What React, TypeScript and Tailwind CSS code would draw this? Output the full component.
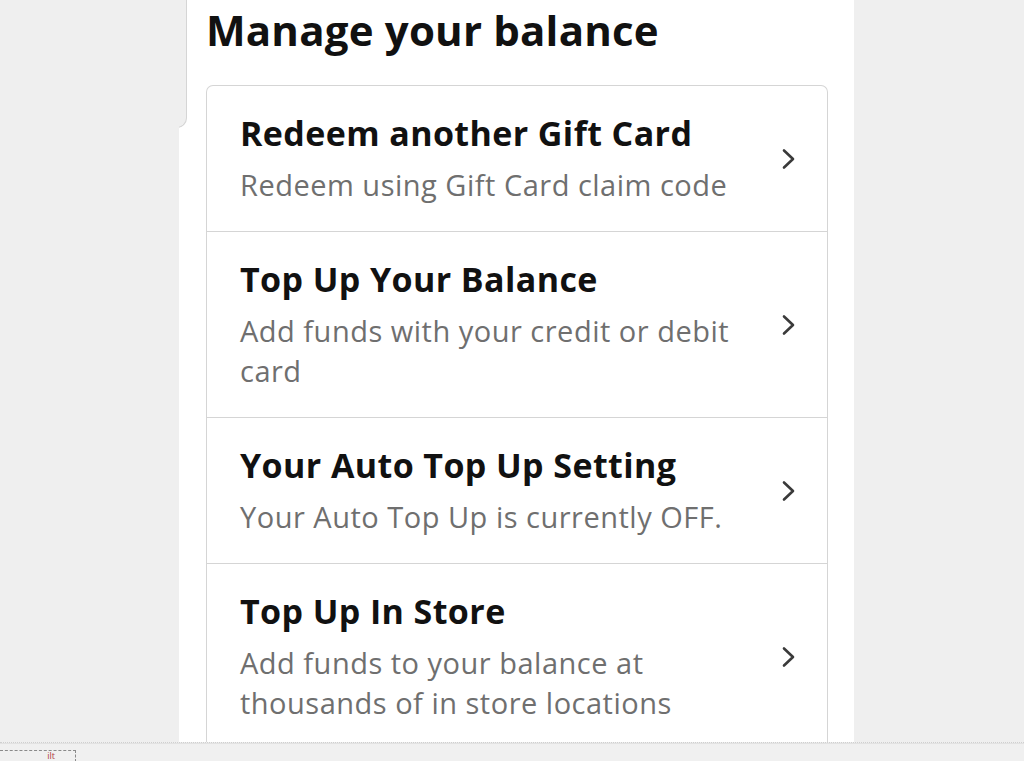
const items = [
  { title: "Redeem another Gift Card", sub: "Redeem using Gift Card claim code" },
  { title: "Top Up Your Balance", sub: "Add funds with your credit or debit card" },
  { title: "Your Auto Top Up Setting", sub: "Your Auto Top Up is currently OFF." },
  { title: "Top Up In Store", sub: "Add funds to your balance at thousands of in store locations" },
];

function Chevron() {
  return (
    <svg width="16" height="22" viewBox="0 0 16 22" fill="none" className="shrink-0">
      <path d="M3 2.5 L12 11 L3 19.5" stroke="#3a3a3a" strokeWidth="2.6" strokeLinecap="round" strokeLinejoin="round" />
    </svg>
  );
}

export default function App() {
  return (
    <div className="relative h-[761px] w-[1024px] overflow-hidden bg-[#efefef]" style={{ fontFamily: '"Open Sans", "Noto Sans", sans-serif' }}>
      <div className="flex h-[742px]">
        <div className="w-[179px] shrink-0" />
        <div className="relative w-[675px] shrink-0 overflow-hidden bg-white">
          {/* leftover corner of panel above */}
          <div className="absolute left-[-10px] top-[-20px] h-[148px] w-[18px] rounded-br-[10px] border-b border-r border-[#d5d5d5] bg-[#efefef]" />
          <div className="pl-[27px] pr-[26px]">
            <h1 className="pt-[5px] text-[42px] font-bold leading-[50px] tracking-[0.2px] text-[#111]">Manage your balance</h1>
            <div className="mt-[30px] rounded-t-[7px] border-x border-t border-[#d5d5d5]">
              {items.map((it, i) => (
                <div key={i} className={"flex items-center justify-between pl-[33px] pr-[30px] " + (i > 0 ? "border-t border-[#d5d5d5]" : "")}>
                  <div className="max-w-[515px] pt-[27px] pb-[26px]">
                    <div className="text-[34px] font-bold leading-[40px] tracking-[0.4px] text-[#111]">{it.title}</div>
                    <div className="mt-[12px] text-[29px] leading-[40px] tracking-[0.5px] text-[#6f6f6f]">{it.sub}</div>
                  </div>
                  <Chevron />
                </div>
              ))}
            </div>
          </div>
        </div>
      </div>
      <div className="border-t border-dotted border-[#cfcfcf]" />
      <div className="flex h-[18px] border-t border-[#e2e2e2] bg-[#f0f0f0]">
        <div className="mt-[6px] flex h-[12px] w-[76px] items-start justify-end border-r border-t border-dashed border-[#8a8a8a] pr-[20px]">
          <span className="text-[9px] leading-none text-[#b04040]">ilt</span>
        </div>
      </div>
    </div>
  );
}
